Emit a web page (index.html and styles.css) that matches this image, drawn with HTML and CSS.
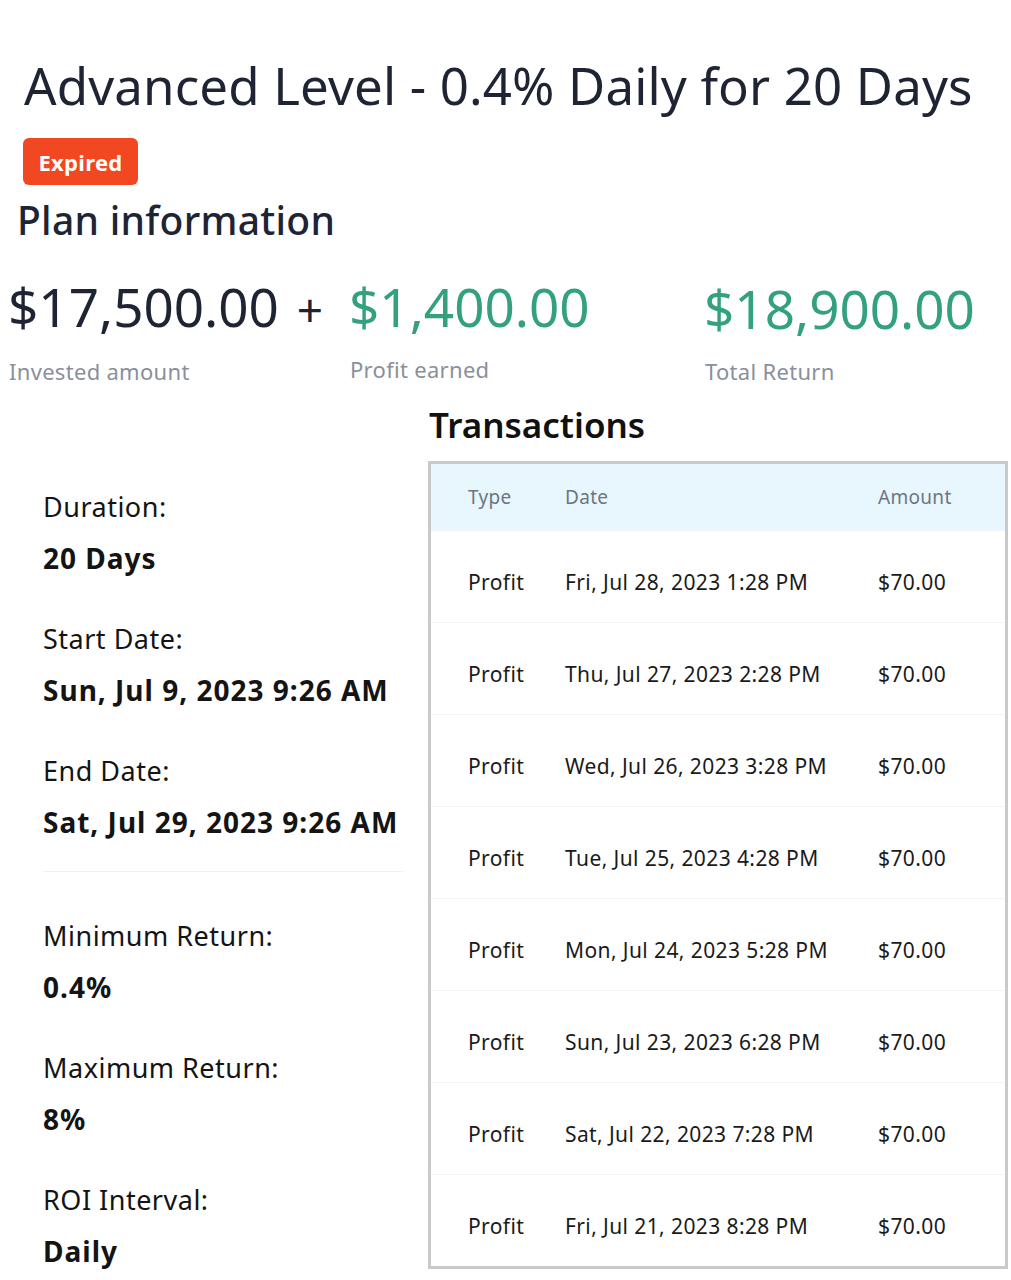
FILE: index.html
```html
<!DOCTYPE html>
<html>
<head>
<meta charset="utf-8">
<link rel="stylesheet" href="styles.css">
</head>
<body>
<div class="page">
  <h1 class="title">Advanced Level - 0.4% Daily for 20 Days</h1>
  <div class="badge-row"><span class="badge">Expired</span></div>
  <h2 class="plan-title">Plan information</h2>

  <div class="stats">
    <div class="stat stat-invested">
      <div class="amount dark">$17,500.00 <span class="plus">+</span></div>
      <div class="label">Invested amount</div>
    </div>
    <div class="stat stat-profit">
      <div class="amount green">$1,400.00</div>
      <div class="label">Profit earned</div>
    </div>
    <div class="stat stat-total">
      <div class="amount green">$18,900.00</div>
      <div class="label">Total Return</div>
    </div>
  </div>

  <div class="main">
    <div class="details">
      <div class="item"><div class="key">Duration:</div><div class="val">20 Days</div></div>
      <div class="item"><div class="key">Start Date:</div><div class="val">Sun, Jul 9, 2023 9:26 AM</div></div>
      <div class="item"><div class="key">End Date:</div><div class="val">Sat, Jul 29, 2023 9:26 AM</div></div>
      <div class="divider"></div>
      <div class="item"><div class="key">Minimum Return:</div><div class="val">0.4%</div></div>
      <div class="item"><div class="key">Maximum Return:</div><div class="val">8%</div></div>
      <div class="item"><div class="key">ROI Interval:</div><div class="val">Daily</div></div>
    </div>
    <div class="tx">
      <h3 class="tx-title">Transactions</h3>
      <div class="table">
        <div class="row head">
          <div class="c-type">Type</div><div class="c-date">Date</div><div class="c-amt">Amount</div>
        </div>
        <div class="row"><div class="c-type">Profit</div><div class="c-date">Fri, Jul 28, 2023 1:28 PM</div><div class="c-amt">$70.00</div></div>
        <div class="row"><div class="c-type">Profit</div><div class="c-date">Thu, Jul 27, 2023 2:28 PM</div><div class="c-amt">$70.00</div></div>
        <div class="row"><div class="c-type">Profit</div><div class="c-date">Wed, Jul 26, 2023 3:28 PM</div><div class="c-amt">$70.00</div></div>
        <div class="row"><div class="c-type">Profit</div><div class="c-date">Tue, Jul 25, 2023 4:28 PM</div><div class="c-amt">$70.00</div></div>
        <div class="row"><div class="c-type">Profit</div><div class="c-date">Mon, Jul 24, 2023 5:28 PM</div><div class="c-amt">$70.00</div></div>
        <div class="row"><div class="c-type">Profit</div><div class="c-date">Sun, Jul 23, 2023 6:28 PM</div><div class="c-amt">$70.00</div></div>
        <div class="row"><div class="c-type">Profit</div><div class="c-date">Sat, Jul 22, 2023 7:28 PM</div><div class="c-amt">$70.00</div></div>
        <div class="row"><div class="c-type">Profit</div><div class="c-date">Fri, Jul 21, 2023 8:28 PM</div><div class="c-amt">$70.00</div></div>
      </div>
    </div>
  </div>
</div>
</body>
</html>
```

FILE: styles.css
```css
* { box-sizing: border-box; }
html, body { margin: 0; padding: 0; background: #ffffff; }
body {
  font-family: "Noto Sans", "Open Sans", "DejaVu Sans", sans-serif;
  color: #1a1f2e;
  width: 1011px;
  height: 1280px;
  overflow: hidden;
}
.page { padding-top: 53px; }

.title {
  margin: 0 0 0 24px;
  font-size: 51px;
  font-weight: 400;
  line-height: 64px;
  color: #1e2433;
  letter-spacing: 0.15px;
  white-space: nowrap;
}
.badge-row { margin: 21px 0 0 23px; height: 47px; }
.badge {
  display: inline-flex;
  align-items: center;
  justify-content: center;
  width: 115px;
  height: 47px;
  background: #f24822;
  border-radius: 6px;
  color: #ffffff;
  font-size: 22px;
  font-weight: 700;
  letter-spacing: 0.3px;
}
.plan-title {
  margin: 8px 0 0 17px;
  font-size: 39px;
  font-weight: 500;
  line-height: 54px;
  color: #1e2433;
  letter-spacing: 0.3px;
}

.stats {
  display: flex;
  margin-top: 30px;
  height: 126px;
}
.stat { display: flex; flex-direction: column; }
.stat-invested { width: 349px; padding-left: 8px; }
.stat-profit { width: 355px; }
.stat-total { padding-top: 2px; }
.amount {
  font-size: 53px;
  line-height: 60px;
  font-weight: 400;
  white-space: nowrap;
}
.amount.dark { color: #1e2433; }
.amount.green { color: #33a07f; }
.plus { margin-left: 4px; font-size: 46px; }
.label {
  margin-top: 17px;
  font-size: 22px;
  color: #8a8f9c;
  line-height: 30px;
  letter-spacing: 0.3px;
  padding-left: 1px;
}

.main { display: flex; }
.details {
  width: 428px;
  padding: 87px 0 0 43px;
}
.item { height: 132px; }
.key {
  font-size: 27px;
  line-height: 34px;
  color: #141414;
  letter-spacing: 0.5px;
}
.val {
  margin-top: 17px;
  font-size: 28px;
  line-height: 34px;
  font-weight: 700;
  color: #141414;
  letter-spacing: 1px;
  white-space: nowrap;
}
.divider {
  width: 360px;
  height: 1px;
  background: #f1f1f1;
  margin: -15px 0 47px 0;
}

.tx { width: 580px; }
.tx-title {
  margin: 0 0 14px 1px;
  font-size: 35px;
  line-height: 44px;
  font-weight: 600;
  color: #111111;
}
.table {
  border: 3px solid #c9c9c9;
  width: 580px;
}
.row {
  display: flex;
  align-items: center;
  height: 92px;
  padding: 10px 0 0 37px;
  border-top: 1px solid #f4f4f4;
  font-size: 21px;
  letter-spacing: 0.4px;
  color: #1a1a1a;
  white-space: nowrap;
}
.row.head {
  height: 66px;
  padding-top: 0;
  border-top: none;
  background: #e8f6fd;
  color: #6e7583;
  font-size: 19px;
  letter-spacing: 0.3px;
}
.c-type { width: 97px; }
.c-date { width: 313px; }
```
